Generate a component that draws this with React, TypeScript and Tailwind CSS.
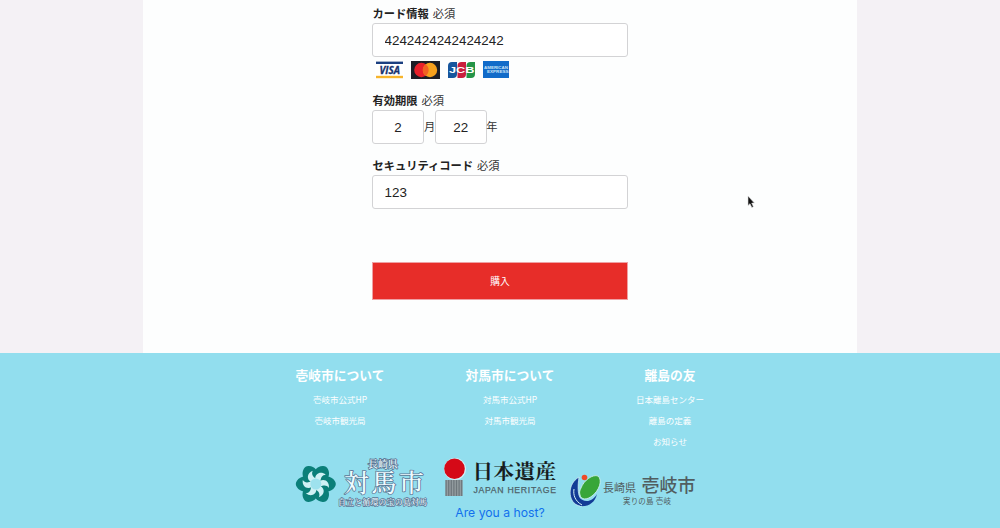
import type { ReactNode } from "react";

const field =
  "h-[34px] rounded-[3px] border border-[#d3d3d5] bg-white text-[13.4px] text-[#222] font-['Liberation_Sans','Noto_Sans_CJK_JP',sans-serif] outline-none";

function Label({ children }: { children: ReactNode }) {
  return (
    <div className="h-[18px] pl-[0.5px] whitespace-nowrap text-[11.25px] leading-[16px] text-[#333]">
      <b className="text-[#222]">{children}</b>
      <span className="ml-1">必須</span>
    </div>
  );
}

function CardBrands() {
  return (
    <div className="flex h-[25px] items-center gap-[7px] pl-[3px]">
      <svg width="29" height="18" viewBox="0 0 29 18">
        <rect width="29" height="18" fill="#fff" />
        <rect x="1" y="0.600" width="27" height="2.400" fill="#1a3f80" />
        <rect x="1" y="14.800" width="27" height="2.400" fill="#f7b52c" />
        <text x="4.500" y="12.500" textLength="20.500" lengthAdjust="spacingAndGlyphs" fontFamily="Open Sans, sans-serif" fontWeight="700" fontStyle="italic" fontSize="10" fill="#17326e" stroke="#17326e" strokeWidth=".3">VISA</text>
      </svg>
      <svg width="29" height="18" viewBox="0 0 29 18">
        <rect width="29" height="18" fill="#1d1d25" />
        <circle cx="10.400" cy="9" r="7.200" fill="#e8202a" />
        <circle cx="19" cy="9" r="7.200" fill="#f6a01c" />
        <path d="M14.700 3.200a7.200 7.200 0 0 1 0 11.600a7.200 7.200 0 0 1 0-11.600" fill="#f16122" />
      </svg>
      <svg width="29" height="18" viewBox="0 0 29 18">
        <path d="M5 1h5v12q0 4-4 4H1V5q0-4 4-4" fill="#16569d" />
        <path d="M14.500 1H19v12q0 4-4 4h-4.500V5q0-4 4-4" fill="#c91f3d" />
        <path d="M23.500 1H28v12q0 4-4 4h-4.500V5q0-4 4-4" fill="#249447" />
        <text x="2" y="12.300" textLength="25.500" lengthAdjust="spacingAndGlyphs" fontFamily="Liberation Sans, sans-serif" fontWeight="700" fontSize="9" fill="#fff">JCB</text>
      </svg>
      <svg width="26" height="17" viewBox="0 0 26 17">
        <rect width="26" height="17" fill="#116bc9" />
        <text x="1" y="8.300" textLength="24" lengthAdjust="spacingAndGlyphs" fontFamily="Liberation Sans, sans-serif" fontWeight="700" fontSize="4.300" fill="#c9e2f7">AMERICAN</text>
        <text x="4" y="12" textLength="21.500" lengthAdjust="spacingAndGlyphs" fontFamily="Liberation Sans, sans-serif" fontWeight="700" fontSize="4.300" fill="#c9e2f7">EXPRESS</text>
      </svg>
    </div>
  );
}

function LinkColumn({ title, links }: { title: string; links: string[] }) {
  return (
    <div className="flex w-[170px] flex-col items-center text-white">
      <h2 className="h-[26px] text-[12.75px] leading-[20px] font-bold">{title}</h2>
      {links.map((link) => (
        <a key={link} className="h-[21px] text-[8.5px] leading-[17px]">
          {link}
        </a>
      ))}
    </div>
  );
}

const petals = [30, 90, 150, 210, 270, 330];

function TsushimaLogo() {
  return (
    <svg width="134" height="52" viewBox="0 0 134 52" className="shrink-0">
      <g transform="translate(20.8 27)">
        {petals.map((angle) => (
          <path key={angle} transform={`rotate(${angle})`} d="M-5-5C-9-9-8-16-3-19Q0-21 3-19C8-16 9-9 5-5Z" fill="#0b7f79" />
        ))}
        {petals.map((angle) => (
          <path key={angle} transform={`rotate(${angle})`} d="M-3-4C-6-9-2-14 4-13C1-11 1-8 3-4Z" fill="#d0f1f5" />
        ))}
        <circle r="5.500" fill="#9ee2ee" />
      </g>
      <g fontFamily="Liberation Serif, Noto Serif CJK JP, serif" fontWeight="500" fill="#eefcff" stroke="#5c7896" paintOrder="stroke" strokeLinejoin="round">
        <text x="73" y="11" fontSize="10" textLength="30" strokeWidth="1.800">長崎県</text>
        <text x="49" y="35" fontSize="25" textLength="80" strokeWidth="1.600">対馬市</text>
        <text x="43" y="48" fontSize="7.800" textLength="89" strokeWidth="1.600">自立と循環の宝の島対馬</text>
      </g>
    </svg>
  );
}

const bars = [0, 2.6, 5.2, 7.8, 10.4, 13, 15.6];

function HeritageLogo() {
  return (
    <svg width="114" height="42" viewBox="0 0 114 42">
      <circle cx="12" cy="12" r="11" fill="#fff" opacity=".6" />
      <circle cx="11.500" cy="11.800" r="10.300" fill="#d50917" />
      <rect x="2.500" y="23" width="17" height="16" fill="#929b9f" />
      {bars.map((x) => (
        <rect key={x} x={x + 2.5} y="23" width="1.200" height="16" fill="#6d767b" />
      ))}
      <text x="29.500" y="21.800" textLength="83.500" fontFamily="Liberation Serif, Noto Serif CJK JP, serif" fontWeight="700" fontSize="20.500" fill="#171d20">日本遺産</text>
      <text x="30.500" y="36.300" textLength="82.500" fontFamily="Liberation Sans, sans-serif" fontSize="8.700" fill="#4e6269" stroke="#4e6269" strokeWidth=".25">JAPAN HERITAGE</text>
    </svg>
  );
}

function IkiLogo() {
  return (
    <svg width="130" height="40" viewBox="0 0 130 40" className="shrink-0">
      <path d="M9 5C-3 12-2 29 7 33C11 35 15 34 18 32C11 30 6 25 9 5Z" fill="#123b96" stroke="#d8f3f8" strokeWidth=".7" />
      <path d="M8 24C13 31 22 31 27 22C25 31 18 35 10 34Z" fill="#123b96" />
      <path d="M4 17C3 23 5 29 12 33" fill="none" stroke="#d8f3f8" strokeWidth="1" />
      <path d="M11 16C14 8 23 2 28 4C33 8 29 19 22 24C17 28 11 28 10 23C9 20 10 18 11 16Z" fill="#38a639" stroke="#d8f3f8" strokeWidth=".8" />
      <circle cx="14.500" cy="5.500" r="2.800" fill="#ef4a28" />
      <g fontFamily="Liberation Sans, Noto Sans CJK JP, sans-serif" fill="#515d60">
        <text x="33" y="19.500" fontSize="11" textLength="33">長崎県</text>
        <text x="71.500" y="20" fontSize="18" fontWeight="500" textLength="54">壱岐市</text>
        <text x="53" y="31.700" fontSize="7.500" textLength="48">実りの島 壱岐</text>
      </g>
    </svg>
  );
}

export default function App() {
  return (
    <div className="relative h-[528px] w-[1000px] overflow-hidden bg-[#f4f1f5] font-['Noto_Sans_CJK_JP',sans-serif]">
      <main className="mx-auto h-[353px] w-[714px] bg-[#fdfefe] pt-[5px]">
        <form className="mx-auto flex w-[256px] flex-col" onSubmit={(e) => e.preventDefault()}>
          <Label>カード情報</Label>
          <input className={`${field} w-full px-[11.5px]`} defaultValue="4242424242424242" />
          <CardBrands />
          <div className="mt-[10px]">
            <Label>有効期限</Label>
          </div>
          <div className="flex h-[34px] items-center text-[11.25px] text-[#333]">
            <input className={`${field} w-[52px] text-center`} defaultValue="2" />
            <span className="-mr-[0.5px] pb-0.5">月</span>
            <input className={`${field} w-[52px] text-center`} defaultValue="22" />
            <span className="-ml-[0.5px] pb-0.5">年</span>
          </div>
          <div className="mt-[13px]">
            <Label>セキュリティコード</Label>
          </div>
          <input className={`${field} w-full px-[11.5px]`} defaultValue="123" />
          <button className="mt-[53px] h-[38px] w-full border border-[#efa1a4] bg-[#e72d29] text-[9.75px] text-white">購入</button>
        </form>
      </main>

      <footer className="h-[175px] bg-[#92deee] pt-[12px]">
        <div className="flex h-[92px] pl-[255px]">
          <LinkColumn title="壱岐市について" links={["壱岐市公式HP", "壱岐市観光局"]} />
          <LinkColumn title="対馬市について" links={["対馬市公式HP", "対馬市観光局"]} />
          <div className="-ml-[10px]">
            <LinkColumn title="離島の友" links={["日本離島センター", "離島の定義", "お知らせ"]} />
          </div>
        </div>
        <div className="flex items-start pl-[295px]">
          <TsushimaLogo />
          <div className="ml-[14px] flex w-[114px] flex-col items-center">
            <HeritageLogo />
            <a className="mt-[5px] h-[18px] w-[114px] text-center font-[Inter,sans-serif] text-[12.2px] leading-[18px] whitespace-nowrap text-[#1170ed]">Are you a host?</a>
          </div>
          <div className="mt-[15px] ml-[13px]">
            <IkiLogo />
          </div>
        </div>
      </footer>

      <svg className="absolute top-[195px] left-[746px]" width="9" height="14" viewBox="0 0 9 14">
        <path d="M2 1v9.500l2-1.800 1.800 3.800 1.600-.8-1.700-3.600h2.700z" fill="#111" stroke="#ddd" strokeWidth=".6" />
      </svg>
    </div>
  );
}
